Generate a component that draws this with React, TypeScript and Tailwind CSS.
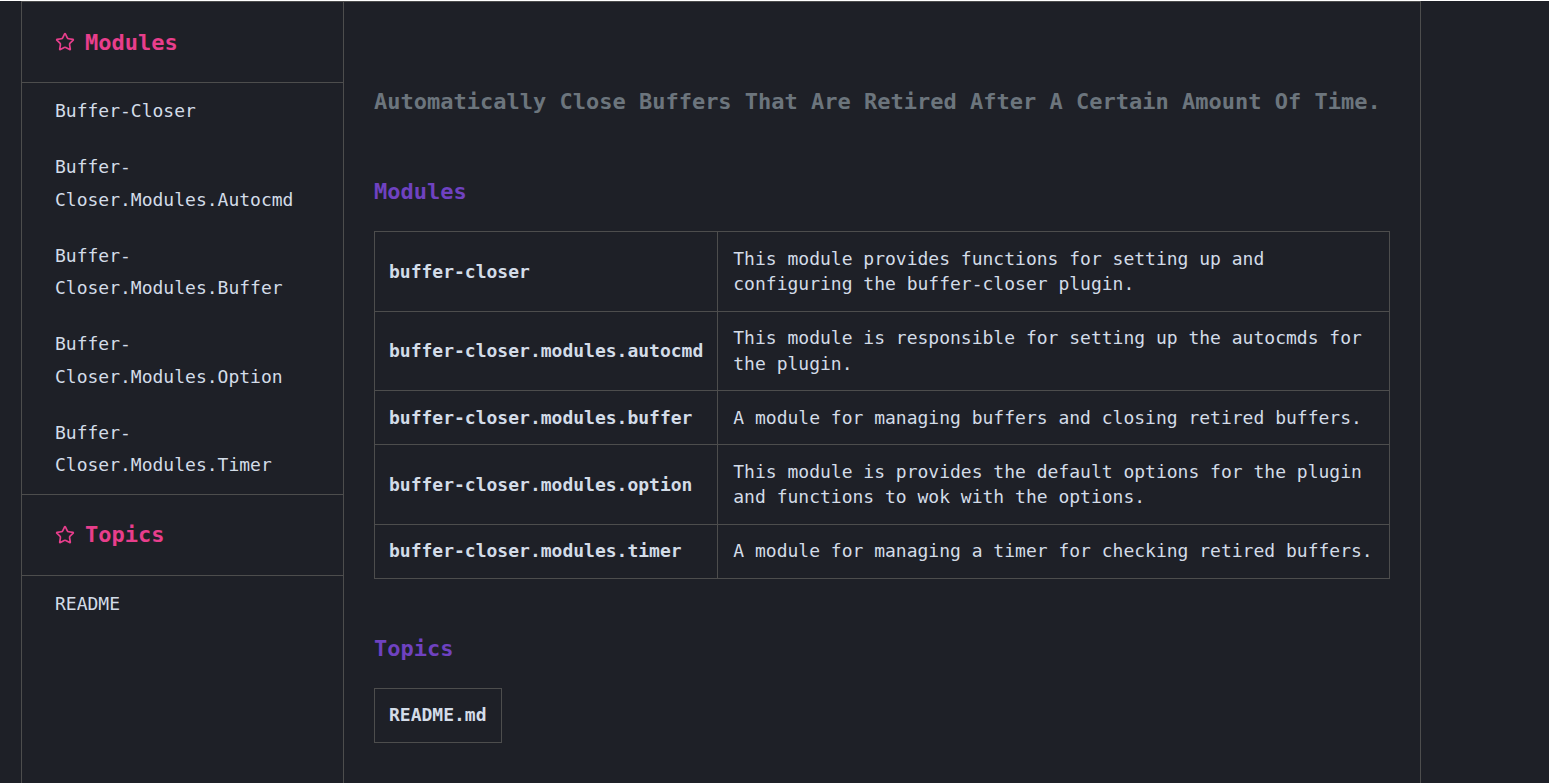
import { Star } from "lucide-react";

const modules = [
  {
    name: "buffer-closer",
    desc: "This module provides functions for setting up and configuring the buffer-closer plugin.",
  },
  {
    name: "buffer-closer.modules.autocmd",
    desc: "This module is responsible for setting up the autocmds for the plugin.",
  },
  {
    name: "buffer-closer.modules.buffer",
    desc: "A module for managing buffers and closing retired buffers.",
  },
  {
    name: "buffer-closer.modules.option",
    desc: "This module is provides the default options for the plugin and functions to wok with the options.",
  },
  {
    name: "buffer-closer.modules.timer",
    desc: "A module for managing a timer for checking retired buffers.",
  },
];

const SideHeading = ({ title }: { title: string }) => (
  <div className="h-[81px] flex items-center gap-[10px] px-[33px] border-b border-[#4d4d4d]">
    <Star size={20} strokeWidth={2} className="text-[#e83e8c]" />
    <h3 className="text-[22px] leading-[31px] font-bold text-[#e83e8c]">{title}</h3>
  </div>
);

const App = () => {
  return (
    <div
      className="min-h-screen bg-[#1e2027] text-[18px] text-[#d3dce8]"
      style={{ fontFamily: '"DejaVu Sans Mono", "Liberation Mono", monospace' }}
    >
      <div className="ml-[21px] mt-px w-[1400px] min-h-[782px] flex border-t border-l border-r border-[#4d4d4d]">
        {/* sidebar */}
        <aside className="w-[322px] shrink-0 border-r border-[#4d4d4d]">
          <SideHeading title="Modules" />
          <ul className="border-b border-[#4d4d4d]">
            {modules.map((m) => (
              <li key={m.name} className="px-[33px] py-[12px] leading-[32.3px] capitalize">
                {m.name}
              </li>
            ))}
          </ul>
          <SideHeading title="Topics" />
          <ul>
            <li className="px-[33px] py-[12px] leading-[32.3px]">README</li>
          </ul>
        </aside>

        {/* main */}
        <main className="flex-1 px-[30px] pt-[84px]">
          <h1 className="text-[22px] leading-[31px] font-bold text-[#6c757d] capitalize">
            automatically close buffers that are retired after a certain amount of time.
          </h1>

          <h2 className="mt-[59px] text-[22px] leading-[31px] font-bold text-[#6f42c1]">Modules</h2>
          <table className="mt-[24px] w-full border-collapse">
            <tbody>
              {modules.map((m) => (
                <tr key={m.name}>
                  <td className="border border-[#4d4d4d] px-[14px] py-[13.75px] leading-[25.5px] font-bold whitespace-nowrap">
                    {m.name}
                  </td>
                  <td className="border border-[#4d4d4d] px-[15px] py-[13.75px] leading-[25.5px]">{m.desc}</td>
                </tr>
              ))}
            </tbody>
          </table>

          <h2 className="mt-[54px] text-[22px] leading-[31px] font-bold text-[#6f42c1]">Topics</h2>
          <table className="mt-[24px] border-collapse">
            <tbody>
              <tr>
                <td className="border border-[#4d4d4d] px-[14px] py-[13.75px] leading-[25.5px] font-bold">README.md</td>
              </tr>
            </tbody>
          </table>
        </main>
      </div>
    </div>
  );
};

export default App;
